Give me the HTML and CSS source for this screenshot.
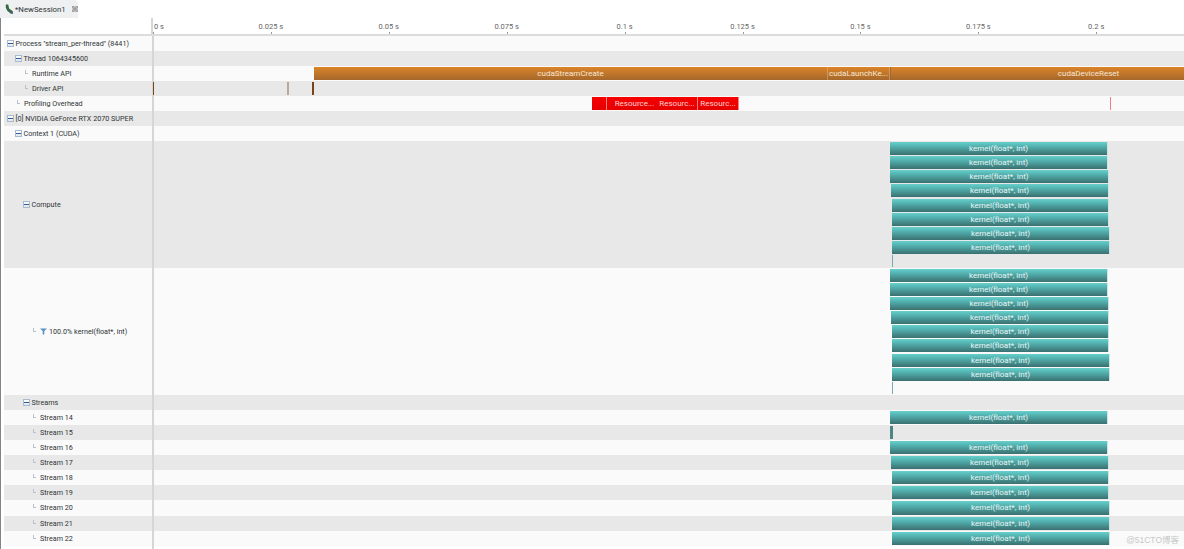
FILE: index.html
```html
<!DOCTYPE html>
<html lang="en">
<head>
  <meta charset="UTF-8" />
  <title>NewSession1</title>
  <link rel="stylesheet" href="styles.css">
</head>
<body>
  <div class="tab-bar">
    <div class="tab">
      <svg class="tab-icon" width="9" height="12" viewBox="0 0 11 13">
        <path d="M1 1h3l1 5 4 3 1 3H7L3 9 1 5z" fill="#2f6b3f" />
        <path d="M5 7l4 2 1 3H7z" fill="#4c5c68" />
      </svg>
      <span>*NewSession1</span>
      <svg class="tab-close" width="6" height="6" viewBox="0 0 7 7">
        <path d="M.5.5h2v2h-2zM4.500.5h2v2h-2zM.5 4.500h2v2h-2zM4.500 4.500h2v2h-2zM2.500 2.500h2v2h-2z" fill="none" stroke="#777" stroke-width=".8" />
      </svg>
    </div>
  </div>

  <div class="main">
    <div class="ruler">
      <div class="ruler-left"></div>
      <div class="ruler-scale">
        <div class="tick" style="left: 0px"><span class="tick-first">0 s</span></div>
        <div class="tick" style="left: 117.9px"><span>0.025 s</span></div>
        <div class="tick" style="left: 235.8px"><span>0.05 s</span></div>
        <div class="tick" style="left: 353.7px"><span>0.075 s</span></div>
        <div class="tick" style="left: 471.6px"><span>0.1 s</span></div>
        <div class="tick" style="left: 589.5px"><span>0.125 s</span></div>
        <div class="tick" style="left: 707.4px"><span>0.15 s</span></div>
        <div class="tick" style="left: 825.3px"><span>0.175 s</span></div>
        <div class="tick" style="left: 943.2px"><span>0.2 s</span></div>
      </div>
    </div>

    <div class="row">
      <div class="label"><i class="minus"></i>Process "stream_per-thread" (8441)</div>
      <div class="track"></div>
    </div>
    <div class="row alt">
      <div class="label indent-1"><i class="minus"></i>Thread 1064345600</div>
      <div class="track"></div>
    </div>
    <div class="row">
      <div class="label indent-leaf-2"><i class="leaf"></i>Runtime API</div>
      <div class="track">
        <div class="bar api" style="left: 160px; width: 514px">cudaStreamCreate</div>
        <div class="bar api" style="left: 674px; width: 62px">cudaLaunchKe...</div>
        <div class="bar api api-last" style="left: 736px; width: 294px">cudaDeviceReset</div>
      </div>
    </div>
    <div class="row alt">
      <div class="label indent-leaf-2"><i class="leaf"></i>Driver API</div>
      <div class="track">
        <div class="mark driver" style="left: -1px; width: 1px"></div>
        <div class="mark driver-light" style="left: 133px; width: 2px"></div>
        <div class="mark driver" style="left: 158px; width: 2px"></div>
      </div>
    </div>
    <div class="row">
      <div class="label indent-leaf-1"><i class="leaf"></i>Profiling Overhead</div>
      <div class="track">
        <div class="bar overhead" style="left: 438px; width: 15px"></div>
        <div class="bar overhead" style="left: 453px; width: 56px">Resource...</div>
        <div class="bar overhead" style="left: 503px; width: 41px">Resourc...</div>
        <div class="bar overhead" style="left: 544px; width: 41px">Resourc...</div>
        <div class="mark overhead-light" style="left: 956px; width: 1px"></div>
      </div>
    </div>
    <div class="row alt">
      <div class="label"><i class="minus"></i>[0] NVIDIA GeForce RTX 2070 SUPER</div>
      <div class="track"></div>
    </div>
    <div class="row">
      <div class="label indent-1"><i class="minus"></i>Context 1 (CUDA)</div>
      <div class="track"></div>
    </div>

    <div class="row tall alt">
      <div class="label indent-2"><i class="minus"></i>Compute</div>
      <div class="track stack">
        <div class="lane"><div class="bar kernel" style="left: 736px; width: 218px">kernel(float*, int)</div></div>
        <div class="lane"><div class="bar kernel" style="left: 736px; width: 218px">kernel(float*, int)</div></div>
        <div class="lane"><div class="bar kernel" style="left: 736px; width: 219px">kernel(float*, int)</div></div>
        <div class="lane"><div class="bar kernel" style="left: 737px; width: 218px">kernel(float*, int)</div></div>
        <div class="lane"><div class="bar kernel" style="left: 738px; width: 217px">kernel(float*, int)</div></div>
        <div class="lane"><div class="bar kernel" style="left: 738px; width: 217px">kernel(float*, int)</div></div>
        <div class="lane"><div class="bar kernel" style="left: 738px; width: 218px">kernel(float*, int)</div></div>
        <div class="lane"><div class="bar kernel" style="left: 738px; width: 218px">kernel(float*, int)</div></div>
        <div class="lane"><div class="mark kernel-sliver" style="left: 738px; width: 1px"></div></div>
      </div>
    </div>
    <div class="row tall">
      <div class="label indent-leaf-3"><i class="leaf"></i><svg class="filter" width="7" height="7" viewBox="0 0 9 8"><path d="M0 0h9L5.500 3.500V8h-2V3.500z" fill="#5b8fc0" /></svg>100.0% kernel(float*, int)</div>
      <div class="track stack">
        <div class="lane"><div class="bar kernel" style="left: 736px; width: 218px">kernel(float*, int)</div></div>
        <div class="lane"><div class="bar kernel" style="left: 736px; width: 218px">kernel(float*, int)</div></div>
        <div class="lane"><div class="bar kernel" style="left: 736px; width: 219px">kernel(float*, int)</div></div>
        <div class="lane"><div class="bar kernel" style="left: 737px; width: 218px">kernel(float*, int)</div></div>
        <div class="lane"><div class="bar kernel" style="left: 738px; width: 217px">kernel(float*, int)</div></div>
        <div class="lane"><div class="bar kernel" style="left: 738px; width: 217px">kernel(float*, int)</div></div>
        <div class="lane"><div class="bar kernel" style="left: 738px; width: 218px">kernel(float*, int)</div></div>
        <div class="lane"><div class="bar kernel" style="left: 738px; width: 218px">kernel(float*, int)</div></div>
        <div class="lane"><div class="mark kernel-sliver" style="left: 738px; width: 1px"></div></div>
      </div>
    </div>

    <div class="row alt">
      <div class="label indent-2"><i class="minus"></i>Streams</div>
      <div class="track"></div>
    </div>
    <div class="row">
      <div class="label indent-leaf-3"><i class="leaf"></i>Stream 14</div>
      <div class="track"><div class="bar kernel" style="left: 736px; width: 218px">kernel(float*, int)</div></div>
    </div>
    <div class="row alt">
      <div class="label indent-leaf-3"><i class="leaf"></i>Stream 15</div>
      <div class="track"><div class="bar kernel-short" style="left: 736px; width: 3px"></div></div>
    </div>
    <div class="row">
      <div class="label indent-leaf-3"><i class="leaf"></i>Stream 16</div>
      <div class="track"><div class="bar kernel" style="left: 736px; width: 218px">kernel(float*, int)</div></div>
    </div>
    <div class="row alt">
      <div class="label indent-leaf-3"><i class="leaf"></i>Stream 17</div>
      <div class="track"><div class="bar kernel" style="left: 737px; width: 218px">kernel(float*, int)</div></div>
    </div>
    <div class="row">
      <div class="label indent-leaf-3"><i class="leaf"></i>Stream 18</div>
      <div class="track"><div class="bar kernel" style="left: 738px; width: 217px">kernel(float*, int)</div></div>
    </div>
    <div class="row alt">
      <div class="label indent-leaf-3"><i class="leaf"></i>Stream 19</div>
      <div class="track"><div class="bar kernel" style="left: 738px; width: 217px">kernel(float*, int)</div></div>
    </div>
    <div class="row">
      <div class="label indent-leaf-3"><i class="leaf"></i>Stream 20</div>
      <div class="track"><div class="bar kernel" style="left: 738px; width: 218px">kernel(float*, int)</div></div>
    </div>
    <div class="row alt">
      <div class="label indent-leaf-3"><i class="leaf"></i>Stream 21</div>
      <div class="track"><div class="bar kernel" style="left: 738px; width: 218px">kernel(float*, int)</div></div>
    </div>
    <div class="row">
      <div class="label indent-leaf-3"><i class="leaf"></i>Stream 22</div>
      <div class="track"><div class="bar kernel" style="left: 738px; width: 218px">kernel(float*, int)</div></div>
    </div>
    <div class="row filler">
      <div class="label"></div>
      <div class="track"></div>
    </div>
  </div>

  <div class="watermark">@51CTO博客</div>
</body>
</html>
```

FILE: styles.css
```css
html, body {
  height: 100%;
}
body {
  margin: 0;
  background: #fff;
  color: #2e3436;
  font-family: Roboto, sans-serif;
  font-size: 7.2px;
  overflow: hidden;
  position: relative;
}
.tab-bar {
  height: 18px;
  background: #fff;
}
.tab {
  display: inline-flex;
  align-items: center;
  gap: 1px;
  height: 18px;
  width: 78px;
  box-sizing: border-box;
  padding-left: 5px;
  background: #eef0f2;
  border-top-right-radius: 4px;
  font-size: 7.8px;
}
.tab-close {
  margin-left: 5px;
}
.main {
  display: flex;
  flex-direction: column;
  border-left: 1px solid #80858c;
  padding-left: 3px;
  height: 531px;
}
.ruler {
  display: flex;
  flex: none;
  height: 17.5px;
  border-bottom: 2px solid #dcdcdc;
  box-sizing: border-box;
}
.ruler-left {
  width: 147px;
}
.ruler-scale {
  flex: 1;
  position: relative;
  border-left: 2px solid #d6d6d6;
  color: #666;
  font-size: 7.5px;
}
.tick {
  position: absolute;
  bottom: 0;
  width: 1px;
  height: 2px;
  background: #999;
}
.tick span {
  position: absolute;
  bottom: 3px;
  left: 0;
  transform: translateX(-50%);
  white-space: nowrap;
}
.tick .tick-first {
  left: 1px;
  transform: none;
}
.row {
  display: flex;
  flex: none;
  height: 15.1px;
  background: #fafafa;
}
.row.alt {
  background: #e8e8e8;
}
.row.tall {
  height: 126.8px;
}
.row.filler {
  flex: 1;
  height: auto;
  background: #fff;
}
.label {
  width: 148px;
  flex: none;
  display: flex;
  align-items: center;
  padding-left: 3px;
  box-sizing: border-box;
  white-space: nowrap;
}
.indent-1 { padding-left: 11px; }
.indent-2 { padding-left: 19px; }
.indent-leaf-1 { padding-left: 13px; }
.indent-leaf-2 { padding-left: 21px; }
.indent-leaf-3 { padding-left: 29px; }
.minus {
  width: 7px;
  height: 7px;
  box-sizing: border-box;
  margin-right: 1.5px;
  border: 1px solid #a9b9cf;
  background: linear-gradient(#fff, #dfe6ee);
  position: relative;
  flex: none;
}
.minus::after {
  content: "";
  position: absolute;
  left: 0;
  right: 0;
  top: 2px;
  height: 1px;
  background: #2f5f9a;
}
.leaf {
  width: 3px;
  height: 4px;
  margin: 0 4px 3px 0;
  box-sizing: border-box;
  border-left: 1px solid #b6c2cf;
  border-bottom: 1px solid #b6c2cf;
  flex: none;
}
.filter {
  margin-right: 2px;
  flex: none;
}
.track {
  flex: 1;
  position: relative;
  border-left: 2px solid #d6d6d6;
}
.stack {
  display: flex;
  flex-direction: column;
}
.lane {
  position: relative;
  height: 14.1px;
}
.bar {
  position: absolute;
  top: 1px;
  bottom: 1px;
  box-sizing: border-box;
  display: flex;
  align-items: center;
  justify-content: center;
  overflow: hidden;
  white-space: nowrap;
  color: #f2f2f2;
  font-size: 8px;
}
.lane .bar {
  bottom: auto;
  height: 13px;
}
.mark {
  position: absolute;
  top: 1px;
  bottom: 1px;
}
.api {
  background: linear-gradient(#dc8428, #a5682c);
  border-right: 1px solid rgba(255, 230, 200, 0.3);
  color: #f5e6d6;
}
.api-last {
  padding-left: 102px;
  border-left: 1px solid #9a6a35;
  border-right: none;
}
.overhead {
  background: linear-gradient(#f80000, #e40000);
  border-right: 1px solid #ff8080;
  color: #fbd0d0;
}
.kernel {
  background: linear-gradient(#66d0cc, #52b0ae 35%, #3a7070);
  border-right: 1px solid #cfe5e5;
  color: #e8f5f5;
}
.kernel-short {
  background: #4e8584;
}
.driver { background: #7a4318; }
.driver-light { background: #c0a590; }
.overhead-light { background: #f08080; }
.kernel-sliver { background: #7fa8a8; }
.watermark {
  position: absolute;
  right: 5px;
  bottom: 4px;
  color: #c8c8c8;
  font-size: 8.5px;
  font-family: "Liberation Sans", "Noto Sans CJK SC", sans-serif;
}
```
